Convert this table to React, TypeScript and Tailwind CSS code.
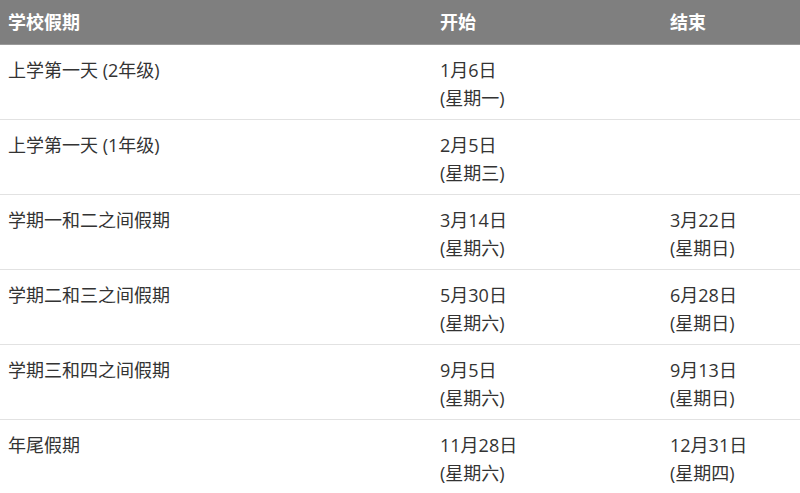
const rows = [
  { name: "上学第一天 (2年级)", start: ["1月6日", "(星期一)"], end: null },
  { name: "上学第一天 (1年级)", start: ["2月5日", "(星期三)"], end: null },
  { name: "学期一和二之间假期", start: ["3月14日", "(星期六)"], end: ["3月22日", "(星期日)"] },
  { name: "学期二和三之间假期", start: ["5月30日", "(星期六)"], end: ["6月28日", "(星期日)"] },
  { name: "学期三和四之间假期", start: ["9月5日", "(星期六)"], end: ["9月13日", "(星期日)"] },
  { name: "年尾假期", start: ["11月28日", "(星期六)"], end: ["12月31日", "(星期四)"] },
]

function DateCell({ value }: { value: string[] | null }) {
  if (!value) return <div />
  return (
    <div className="flex flex-col">
      <span>{value[0]}</span>
      <span>{value[1]}</span>
    </div>
  )
}

export default function App() {
  return (
    <div
      className="h-[493px] w-[800px] overflow-hidden bg-white text-[18px] leading-[28px] text-[#333]"
      style={{ fontFamily: '"Open Sans", "Noto Sans CJK SC", sans-serif' }}
    >
      <div className="grid h-[45px] grid-cols-[432px_230px_138px] items-center border-b border-[#9a9a9a] bg-[#7f7f7f] pl-2 font-bold text-white">
        <span>学校假期</span>
        <span>开始</span>
        <span>结束</span>
      </div>
      {rows.map((row) => (
        <div
          key={row.name}
          className="grid h-[75px] grid-cols-[432px_230px_138px] border-b border-[#e2e2e2] pl-2 pt-[11px]"
        >
          <span>{row.name}</span>
          <DateCell value={row.start} />
          <DateCell value={row.end} />
        </div>
      ))}
    </div>
  )
}
